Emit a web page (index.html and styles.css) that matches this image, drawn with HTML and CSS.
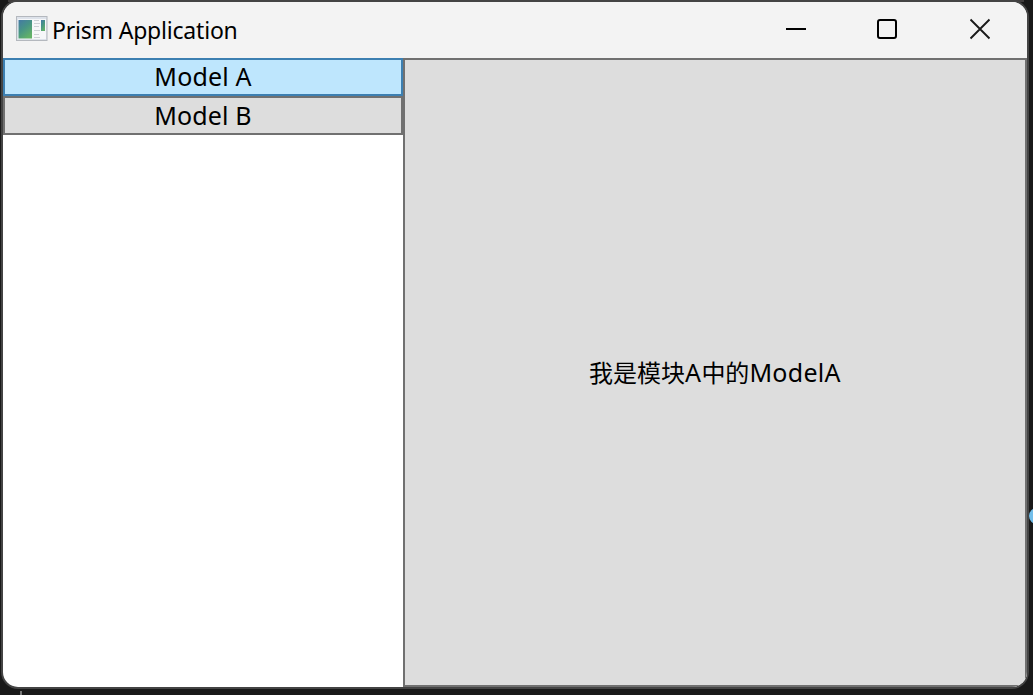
FILE: index.html
```html
<!DOCTYPE html>
<html lang="en">
<head>
<meta charset="utf-8">
<title>Prism Application</title>
<link rel="stylesheet" href="styles.css">
</head>
<body>
<svg class="backdrop" width="1033" height="695" viewBox="0 0 1033 695">
  <path fill="#403d3d" d="M8 0h1016v2H8z"/>
  <path fill="#777" d="M21 0h1v2h-1zM91 0h1v2h-1zM20 691h2v4h-2z"/>
  <path fill="#5285aa" d="M158 1h11v1h-11zM177 0h9v2h-9zM191 0h15v2h-15zM480 0h10v2h-10zM494 0h12v2h-12zM517 0h3v2h-3zM692 0h3v2h-3zM703 0h2v2h-2zM713 0h7v2h-7zM732 0h3v2h-3zM744 0h3v2h-3zM753 0h3v2h-3zM766 0h7v2h-7z"/>
  <path fill="#aaa98a" d="M266 0h3v2h-3zM284 0h8v2h-8zM298 0h14v2h-14zM318 0h3v2h-3zM328 0h3v2h-3zM335 0h12v2h-12zM354 0h9v2h-9zM372 0h11v2h-11zM392 0h8v2h-8zM407 0h12v2h-12zM424 0h12v2h-12zM444 0h3v2h-3zM453 0h3v2h-3zM463 0h3v2h-3z"/>
  <path fill="#aaa5a3" d="M235 0h3v2h-3zM566 0h13v2h-13zM586 0h8v2h-8zM602 0h13v2h-13zM625 0h3v2h-3zM640 0h9v2h-9zM789 0h3v2h-3zM804 0h3v2h-3zM839 0h3v2h-3z"/>
  <circle cx="1037" cy="516" r="8" fill="#71bde9"/>
</svg>
<main class="window">
  <header class="titlebar">
    <svg class="app-icon" width="32" height="27" viewBox="0 0 32 27">
      <defs>
        <linearGradient id="pane" x1="0" y1="0" x2=".6" y2="1"><stop offset="0" stop-color="#4479a5"/><stop offset=".5" stop-color="#479486"/><stop offset="1" stop-color="#62b168"/></linearGradient>
      </defs>
      <path fill="#b4b8be" d="M0 1h31.500v25H0z"/>
      <path fill="#dde2ea" d="M1 2h29.500v23H1z"/>
      <path fill="#f6f7f9" d="M2 4h28v20H2z"/>
      <path fill="url(#pane)" d="M2.500 5H16v18.500H2.500z"/>
      <path fill="url(#pane)" d="M25 5h4v11h-4z"/>
      <path stroke="#ccd0d5" d="M18 5.500h5M18 8.500h6M18 11.500h5M18 15.500h6M18 19.500h5M18 22.500h6"/>
    </svg>
    <h1 class="title">Prism Application</h1>
    <div class="controls">
      <svg width="92" height="56" viewBox="0 0 92 56"><path fill="#000" d="M35 26h20v2H35z"/></svg>
      <svg width="92" height="56" viewBox="0 0 92 56"><rect x="35" y="18" width="18" height="18" rx="2" fill="none" stroke="#000" stroke-width="2"/></svg>
      <svg width="92" height="56" viewBox="0 0 92 56"><path d="M35.500 17.500l19 19M54.500 17.500l-19 19" fill="none" stroke="#1a1a1a" stroke-width="1.900"/></svg>
    </div>
  </header>
  <div class="content">
    <nav class="menu">
      <button class="item active"><span class="label">Model A</span></button>
      <button class="item"><span class="label">Model B</span></button>
    </nav>
    <button class="view"><span class="message">我是模块<span class="latin">A</span>中的<span class="latin">ModelA</span></span></button>
  </div>
</main>
</body>
</html>
```
FILE: styles.css
```css
* { box-sizing: border-box; }
body {
  margin: 0;
  width: 1033px;
  height: 695px;
  overflow: hidden;
  padding: 2px 0 0 3px;
  background: #191919;
  color: #000;
  font-family: "Noto Sans", "Noto Sans CJK SC", sans-serif;
}
.backdrop { position: absolute; left: 0; top: 0; }
.window {
  position: relative;
  display: flex;
  flex-direction: column;
  width: 1024px;
  height: 685px;
  overflow: hidden;
  border-radius: 15px;
  background: #fff;
  box-shadow: 0 0 0 2px #444;
}
.titlebar {
  display: flex;
  align-items: center;
  height: 56px;
  flex: none;
  padding-left: 13px;
  background: #f3f3f3;
}
.app-icon { flex: none; margin-bottom: 3px; }
.title {
  margin: 0 0 0 4px;
  font-size: 23px;
  font-weight: 400;
  line-height: 32px;
  letter-spacing: -0.2px;
  white-space: nowrap;
}
.controls { display: flex; margin-left: auto; }
.content { display: flex; flex: 1; min-height: 0; }
.menu { display: flex; flex-direction: column; width: 400px; }
.item, .view {
  display: flex;
  align-items: center;
  justify-content: center;
  margin: 0;
  padding: 0;
  border: 2px solid #707070;
  border-radius: 0;
  background: #ddd;
  color: #000;
  font-family: inherit;
  font-size: 24px;
}
.item { height: 39px; }
.active { height: 38px; border-color: #3c7fb1; background: #bee6fd; }
.label { font-size: 25px; line-height: 32px; padding-bottom: 2px; letter-spacing: 0.15px; }
.view { flex: 1; }
.message { line-height: 34px; white-space: nowrap; }
.latin { font-size: 25px; letter-spacing: 0.3px; }
```
